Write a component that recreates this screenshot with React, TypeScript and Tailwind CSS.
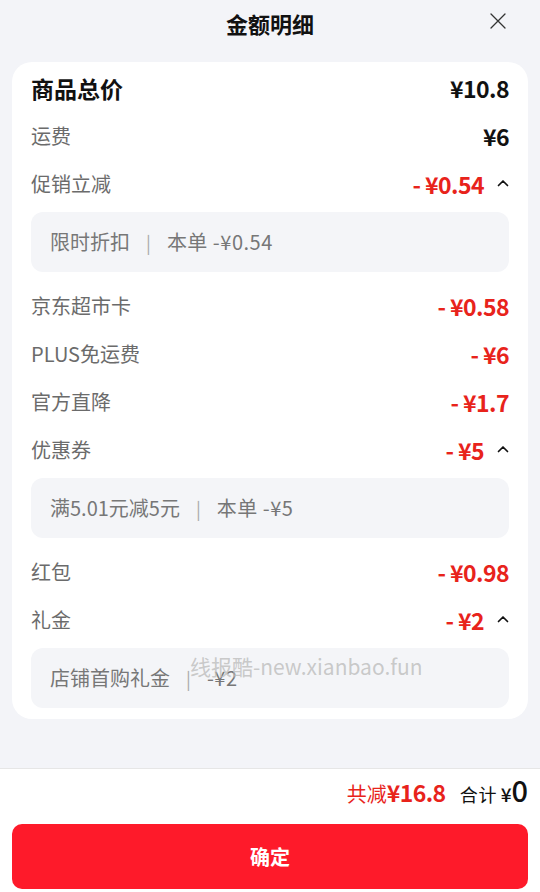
import React from "react";

interface Line {
  label: string;
  amount: string;
  minus?: boolean;
  detail?: [string, string];
}

const lines: Line[] = [
  { label: "运费", amount: "¥6" },
  { label: "促销立减", amount: "¥0.54", minus: true, detail: ["限时折扣", "本单 -¥0.54"] },
  { label: "京东超市卡", amount: "¥0.58", minus: true },
  { label: "PLUS免运费", amount: "¥6", minus: true },
  { label: "官方直降", amount: "¥1.7", minus: true },
  { label: "优惠券", amount: "¥5", minus: true, detail: ["满5.01元减5元", "本单 -¥5"] },
  { label: "红包", amount: "¥0.98", minus: true },
  { label: "礼金", amount: "¥2", minus: true, detail: ["店铺首购礼金", "-¥2"] },
];

const font = { fontFamily: '"Noto Sans CJK SC", "Noto Sans", sans-serif' };

function ChevronUp() {
  return (
    <svg width="12" height="8" viewBox="0 0 12 8" className="ml-[13px] -mt-[3px]">
      <path d="M1.5 6.5 L6 2 L10.5 6.5" fill="none" stroke="#111" strokeWidth="1.7" strokeLinecap="round" strokeLinejoin="round" />
    </svg>
  );
}

export default function App() {
  return (
    <div className="relative w-[540px] h-[892px] bg-[#f3f4f8] flex flex-col overflow-hidden" style={font}>
      {/* header */}
      <div className="relative h-[46px] flex items-center justify-center">
        <span className="text-[22px] font-bold text-[#111] leading-none">金额明细</span>
        <svg width="18" height="18" viewBox="0 0 18 18" className="absolute right-[33px] top-[12px]">
          <path d="M2 2 L16 16 M16 2 L2 16" stroke="#333" strokeWidth="1.3" strokeLinecap="round" />
        </svg>
      </div>

      {/* card */}
      <div className="mx-3 mt-[16px] bg-white rounded-[20px] px-[19px] pt-[2px] pb-[11px]">
        <div className="h-12 flex items-center justify-between">
          <span className="text-[23px] font-bold text-[#111]">商品总价</span>
          <span className="text-[23px] font-bold text-[#111] tracking-tight">¥10.8</span>
        </div>
        {lines.map((l, i) => (
          <div key={i}>
            <div className={`h-12 flex items-center justify-between ${i === 2 || i === 6 ? "mt-[10px]" : ""}`}>
              <span className="text-[20px] text-[#6b6b6b]">{l.label}</span>
              <div className="flex items-center">
                {l.minus ? (
                  <span className="text-[23px] font-bold text-[#e8231b] tracking-tight">- {l.amount}</span>
                ) : (
                  <span className="text-[23px] font-bold text-[#111] tracking-tight">{l.amount}</span>
                )}
                {l.detail && <ChevronUp />}
              </div>
            </div>
            {l.detail && (
              <div className="mt-[4px] h-[60px] rounded-[12px] bg-[#f4f5f8] flex items-center px-[19px] text-[20px] text-[#777]">
                <span>{l.detail[0]}</span>
                <span className="mx-[16px] text-[#aaa] text-[18px]">|</span>
                <span className="tracking-[0.5px]">{l.detail[1]}</span>
              </div>
            )}
          </div>
        ))}
      </div>

      <div className="flex-1" />

      {/* footer */}
      <div className="bg-white border-t border-[#e6e6e6] h-[124px] px-3 pt-[6px]">
        <div className="flex items-baseline justify-end h-[40px]">
          <span className="text-[20px] text-[#e8231b]">共减</span>
          <span className="text-[23px] font-bold text-[#e8231b] tracking-tight">¥16.8</span>
          <span className="text-[18px] text-[#111] ml-[14px] tracking-[1px]">合计</span>
          <span className="text-[19px] font-medium text-[#111] ml-[3px]">¥</span>
          <span className="text-[29px] font-medium text-[#111] leading-none">0</span>
        </div>
        <button className="mt-[9px] w-full h-[65px] rounded-[10px] bg-[#fe1a2a] text-white text-[20px] font-bold flex items-center justify-center">
          确定
        </button>
      </div>

      {/* watermark */}
      <div className="absolute left-[190px] top-[651px] text-[21px] text-[#bdbdbd]/80 pointer-events-none">
        线报酷-new.xianbao.fun
      </div>
    </div>
  );
}
